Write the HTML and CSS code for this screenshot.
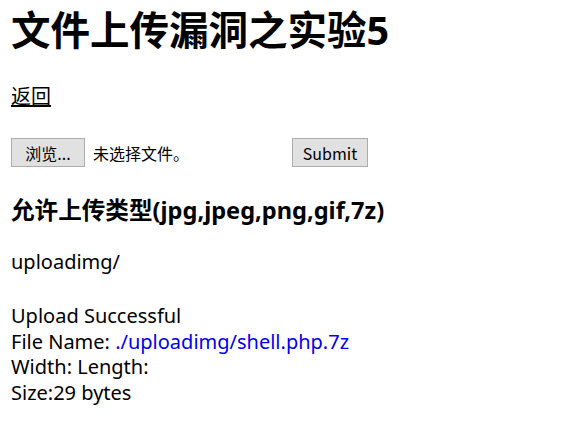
FILE: index.html
```html
<!DOCTYPE html>
<html lang="zh-CN">
<head>
<meta charset="utf-8">
<title>文件上传漏洞之实验5</title>
<link rel="stylesheet" href="styles.css">
</head>
<body>
<div class="page">
  <h1 class="title">文件上传漏洞之实验5</h1>
  <p class="back-line"><a class="back" href="#">返回</a></p>
  <form class="upload-form">
    <span class="file-input">
      <button type="button" class="btn btn-browse">浏览...</button>
      <span class="file-status">未选择文件。</span>
    </span>
    <button type="button" class="btn btn-submit">Submit</button>
  </form>
  <h3 class="types">允许上传类型(jpg,jpeg,png,gif,7z)</h3>
  <p class="dir">uploadimg/</p>
  <div class="result">
    <div>Upload Successful</div>
    <div>File Name: <a class="file-link" href="#">./uploadimg/shell.php.7z</a></div>
    <div>Width: Length:</div>
    <div>Size:29 bytes</div>
  </div>
</div>
</body>
</html>
```
FILE: styles.css
```css
html, body {
  margin: 0;
  padding: 0;
  background: #fff;
}
body {
  font-family: "Noto Sans", "Noto Sans CJK SC", sans-serif;
  font-size: 20px;
  color: #000;
}
.page {
  padding: 0 11px;
}
.title {
  margin: 0;
  padding-top: 6px;
  font-size: 39.5px;
  line-height: 48px;
  font-weight: 700;
}
.back-line {
  margin: 30px 0 0;
  line-height: 26px;
}
.back {
  color: #000;
  text-decoration: underline;
}
.upload-form {
  margin-top: 28px;
  display: flex;
  align-items: center;
}
.file-input {
  display: flex;
  align-items: center;
  width: 281px;
}
.btn {
  font-family: "Noto Sans CJK SC", sans-serif;
  font-size: 16px;
  color: #000;
  background: #e1e1e1;
  border: 1px solid #adadad;
  border-radius: 0;
  height: 29px;
  padding: 0;
  margin: 0;
}
.btn-browse {
  width: 74px;
}
.btn-submit {
  width: 76px;
}
.file-status {
  margin-left: 8px;
  font-family: "Noto Sans CJK SC", sans-serif;
  font-size: 16px;
}
.types {
  margin: 28px 0 0;
  font-size: 23.6px;
  line-height: 30px;
  font-weight: 700;
}
.dir {
  margin: 24px 0 0;
  line-height: 26px;
}
.result {
  margin-top: 28px;
  line-height: 25.5px;
}
.file-link {
  color: #0000ee;
  text-decoration: none;
}
```
